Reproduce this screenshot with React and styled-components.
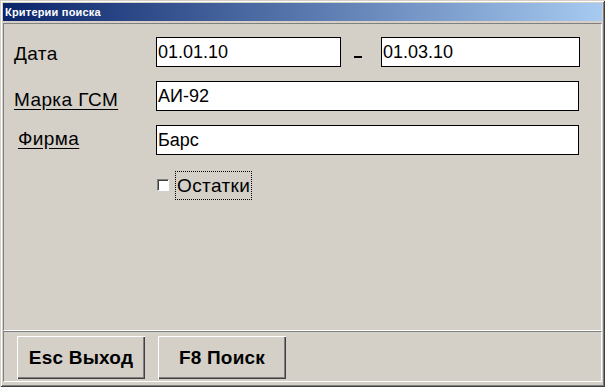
import React from 'react';
import styled, { createGlobalStyle } from 'styled-components';

const GlobalStyle = createGlobalStyle`
  html, body {
    margin: 0;
    padding: 0;
    background: #d4d0c8;
  }
  body {
    font-family: "Liberation Sans", Arial, sans-serif;
  }
`;

const Window = styled.div`
  box-sizing: border-box;
  width: 605px;
  height: 387px;
  padding: 3px;
  background: #d4d0c8;
  box-shadow:
    inset 1px 1px 0 #d4d0c8,
    inset -1px -1px 0 #404040,
    inset 2px 2px 0 #ffffff,
    inset -2px -2px 0 #808080;
  display: flex;
  flex-direction: column;
`;

const TitleBar = styled.div`
  height: 18px;
  flex-shrink: 0;
  display: flex;
  align-items: center;
  padding-left: 2px;
  margin-bottom: 2px;
  background: linear-gradient(to right, #0a246a, #a6caf0);
  color: #fff;
  font: bold 11px "Liberation Sans", Arial, sans-serif;
  letter-spacing: 0.2px;
`;

const Panel = styled.div`
  box-sizing: border-box;
  height: ${p => p.$h}px;
  flex-shrink: 0;
  border-top: 1px solid #808080;
  border-left: 1px solid #808080;
  border-right: 1px solid #ffffff;
  border-bottom: 1px solid #ffffff;
`;

const Form = styled.div`
  display: grid;
  grid-template-columns: 152px auto;
  row-gap: 14px;
  padding: 13px 0 0 0;
`;

const Label = styled.div`
  padding-left: ${p => p.$x || 10}px;
  padding-top: ${p => p.$y}px;
  font-size: 19px;
  letter-spacing: 0.4px;
  line-height: 20px;
  color: #000;
  text-decoration: ${p => (p.$link ? 'underline' : 'none')};
  text-underline-offset: 3px;
`;

const Fields = styled.div`
  display: flex;
  align-items: flex-start;
`;

const Input = styled.div`
  box-sizing: border-box;
  width: ${p => p.$w}px;
  height: 30px;
  border: 1px solid #000;
  background: #fff;
  padding-left: 1px;
  display: flex;
  align-items: center;
  font-size: 18px;
  color: #000;
`;

const Dash = styled.div`
  width: 40px;
  display: flex;
  justify-content: center;
  padding-top: 19px;
`;

const DashMark = styled.div`
  width: 8px;
  height: 2px;
  margin-left: -7px;
  background: #000;
`;

const CheckRow = styled.label`
  display: flex;
  align-items: center;
  gap: 7px;
  padding-left: 1px;
  margin-top: 3px;
  font-size: 19px;
  letter-spacing: 0.4px;
`;

const Box = styled.span`
  box-sizing: border-box;
  width: 12px;
  height: 12px;
  margin-top: -2px;
  background: #fff;
  border-top: 1px solid #808080;
  border-left: 1px solid #808080;
  border-right: 1px solid #fff;
  border-bottom: 1px solid #fff;
  box-shadow: inset 1px 1px 0 #404040;
`;

const Focus = styled.span`
  padding: 4px 1px 3px;
  outline: 1px dotted #000;
  line-height: 20px;
`;

const Buttons = styled.div`
  display: flex;
  gap: 13px;
  padding: 4px 0 0 13px;
`;

const Button = styled.div`
  box-sizing: border-box;
  width: 128px;
  height: 43px;
  background: #d4d0c8;
  display: flex;
  align-items: center;
  justify-content: center;
  font-size: 19px;
  font-weight: bold;
  letter-spacing: 0.2px;
  color: #000;
  box-shadow:
    inset 1px 1px 0 #ffffff,
    inset -1px -1px 0 #404040,
    inset -2px -2px 0 #808080;
`;

export default function App() {
  return (
    <>
      <GlobalStyle />
      <Window>
        <TitleBar>Критерии поиска</TitleBar>
        <Panel $h={308}>
          <Form>
            <Label $y={7}>Дата</Label>
            <Fields>
              <Input $w={185}>01.01.10</Input>
              <Dash><DashMark /></Dash>
              <Input $w={199}>01.03.10</Input>
            </Fields>

            <Label $y={9} $link>Марка ГСМ</Label>
            <Fields>
              <Input $w={423}>АИ-92</Input>
            </Fields>

            <Label $y={4} $x={14} $link>Фирма</Label>
            <Fields>
              <Input $w={423}>Барс</Input>
            </Fields>

            <div />
            <CheckRow>
              <Box />
              <Focus>Остатки</Focus>
            </CheckRow>
          </Form>
        </Panel>
        <Panel $h={51}>
          <Buttons>
            <Button>Esc Выход</Button>
            <Button>F8 Поиск</Button>
          </Buttons>
        </Panel>
      </Window>
    </>
  );
}
